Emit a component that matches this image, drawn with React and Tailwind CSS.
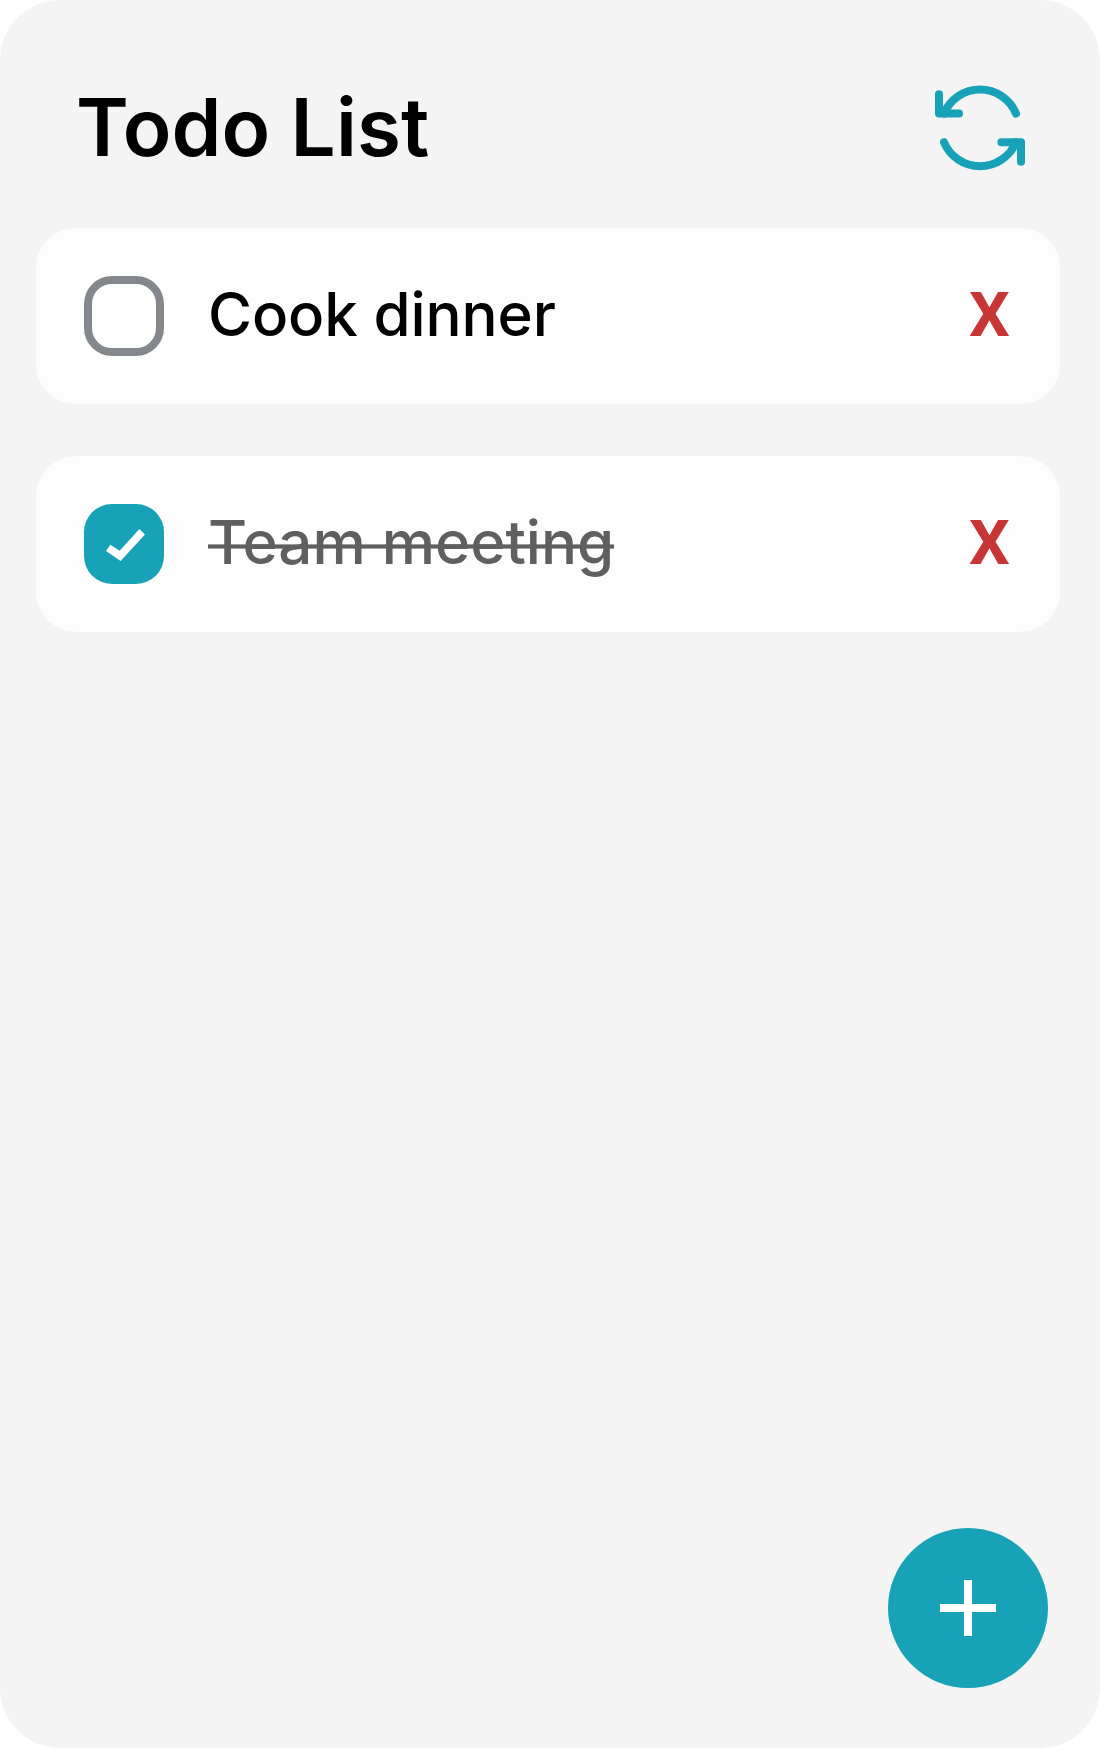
import { useState } from "react";

const initialTodos = [
  { id: 1, label: "Cook dinner", done: false },
  { id: 2, label: "Team meeting", done: true },
];

function RefreshIcon() {
  return (
    <svg width="96" height="96" viewBox="932 80 96 96" fill="none" stroke="currentColor" strokeWidth="8" strokeLinecap="round" strokeLinejoin="round">
      <path d="M939 94.3v19.3h20" />
      <path d="M944 113.6a39 39 0 0 1 72 0" />
      <path d="M1021 161.8v-19.6h-19.6" />
      <path d="M944 142.2a39 39 0 0 0 72 0" />
    </svg>
  );
}

function Checkbox({ checked, onClick }) {
  if (!checked) {
    return <button onClick={onClick} aria-label="Mark done" className="size-20 shrink-0 rounded-[28px] border-8 border-[#84878b]" />;
  }
  return (
    <button onClick={onClick} aria-label="Mark not done" className="size-20 shrink-0 rounded-[28px] bg-[#17a2b8] text-white">
      <svg width="80" height="80" viewBox="0 0 80 80" fill="currentColor">
        <path d="M22 47l4.4-6.3 9.3 6L55.4 25l5.6 5.6L36.6 57z" />
      </svg>
    </button>
  );
}

function TodoItem({ todo, onToggle, onRemove }) {
  return (
    <li className="flex h-44 items-center rounded-[40px] bg-[#fdfdfd] pr-[52px] pl-12">
      <Checkbox checked={todo.done} onClick={onToggle} />
      <div className="ml-11 flex flex-1 pb-1 text-[60px] leading-[72px] font-medium">
        {todo.done ? (
          <s className="relative text-[#5f5f5f] no-underline after:absolute after:inset-x-0 after:top-[38px] after:h-[5px] after:border-y after:border-[#5f5f5f]/60 after:bg-[#5f5f5f] after:bg-clip-padding after:content-['']">
            {todo.label}
          </s>
        ) : (
          <span className="tracking-[-0.1px] text-black">{todo.label}</span>
        )}
      </div>
      <button onClick={onRemove} aria-label="Remove" className="origin-left scale-x-[1.045] pb-0.5 font-['Roboto',sans-serif] text-[61.5px] leading-[72px] font-bold text-[#c83535]">
        X
      </button>
    </li>
  );
}

export default function App() {
  const [todos, setTodos] = useState(initialTodos);
  const toggle = (id) => setTodos(todos.map((t) => (t.id === id ? { ...t, done: !t.done } : t)));
  const remove = (id) => setTodos(todos.filter((t) => t.id !== id));

  return (
    <main className="flex h-[1748px] w-[1100px] flex-col rounded-[60px] bg-[#f4f4f4] pt-20 font-['Inter',sans-serif]">
      <header className="flex h-24 items-center justify-between pr-[72px] pl-[76px]">
        <h1 className="pb-0.5 text-[80px] leading-[96px] font-semibold tracking-[0.1px] text-black">Todo List</h1>
        <button aria-label="Refresh" className="text-[#17a2b8]" onClick={() => setTodos(initialTodos)}>
          <RefreshIcon />
        </button>
      </header>
      <ul className="mt-[52px] mr-10 ml-9 flex flex-1 flex-col gap-[52px]">
        {todos.map((t) => (
          <TodoItem key={t.id} todo={t} onToggle={() => toggle(t.id)} onRemove={() => remove(t.id)} />
        ))}
      </ul>
      <footer className="flex justify-end pr-[52px] pb-[60px]">
        <button aria-label="Add" className="flex size-40 items-center justify-center rounded-full bg-[#17a2b8] text-white">
          <svg width="56" height="56" viewBox="0 0 56 56" fill="currentColor">
            <path d="M24 0h8v24h24v8H32v24h-8V32H0v-8h24z" />
          </svg>
        </button>
      </footer>
    </main>
  );
}
